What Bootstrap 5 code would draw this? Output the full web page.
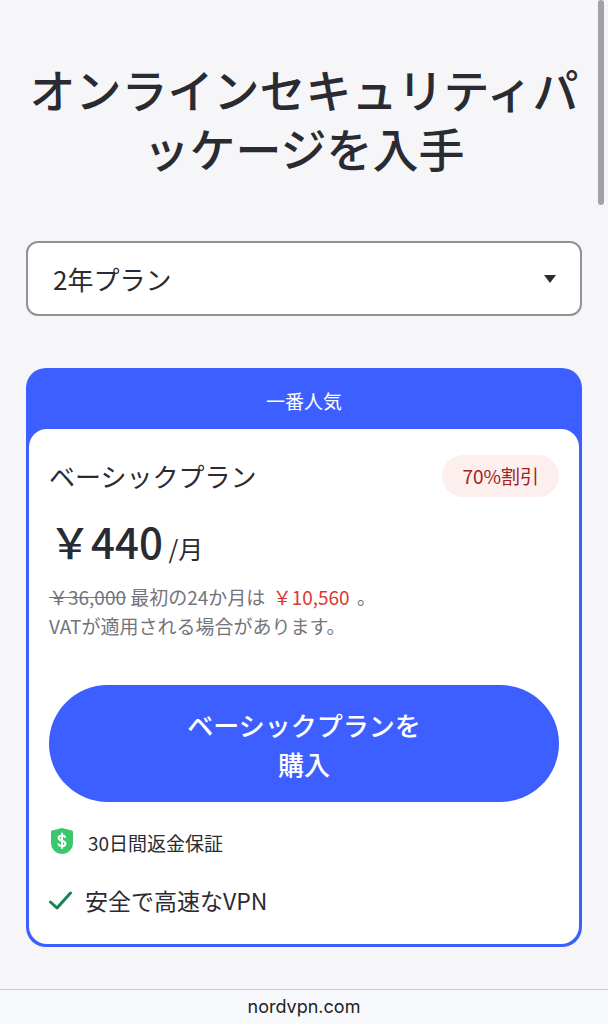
<!DOCTYPE html>
<html lang="ja">
<head>
<meta charset="utf-8">
<meta name="viewport" content="width=device-width, initial-scale=1">
<title>NordVPN</title>
<link href="https://cdn.jsdelivr.net/npm/bootstrap@5.3.0/dist/css/bootstrap.min.css" rel="stylesheet">
<script src="https://cdn.jsdelivr.net/npm/bootstrap@5.3.0/dist/js/bootstrap.bundle.min.js" defer></script>
<style>
:root{--brand:#3e5fff;--ink:#2a2b32;--soft:#74747c}
html{scrollbar-width:none}
body{font-family:"Noto Sans CJK JP",sans-serif;color:var(--ink);background:#f6f6f9}
.page{padding:59px 26px 40px}
.page-title{font-size:46px;line-height:59px;font-weight:500;margin:0 0 64px}
.plan-select{height:75px;border:2px solid #919197;border-radius:12px;font-size:26px;color:var(--ink);padding:0 60px 0 25px;background:#fff url("data:image/svg+xml,%3Csvg xmlns='http://www.w3.org/2000/svg' viewBox='0 0 12 8'%3E%3Cpath d='M0 0h12L6 8z' fill='%232a2b32'/%3E%3C/svg%3E") no-repeat right 24px center/12px 8px;margin-bottom:52px}
.plan{background:var(--brand);border-radius:20px;padding:0 3px 3px}
.plan-flag{color:#fff;font-size:19px;line-height:28px;padding:19px 0 14px}
.plan-body{background:#fff;border-radius:18px;padding:26px 20px 28px}
.plan-name{font-size:26px;line-height:42px;font-weight:400;margin:0}
.off{background:#fdefee;color:#a3211c;font-size:19px;line-height:42px;padding:0 20px}
.price{font-size:42px;line-height:52px;font-weight:500;margin-top:18px}
.per{font-size:25px}
.terms{font-size:19px;line-height:29px;color:var(--soft);margin:8px 0 45px}
.sale{color:#d93a30;margin:0 3px}
.buy{background:var(--brand);color:#fff;font-size:26px;line-height:39px;font-weight:500;padding:20px 130px 19px;--bs-btn-color:#fff;--bs-btn-hover-bg:#2f4fe8;--bs-btn-hover-color:#fff}
.perk{line-height:32px}
.guarantee{font-size:19px;gap:14px;margin:25px 0}
.feature{font-size:23px;gap:12px}
.address{height:35px;border-top:1px solid #c9c9ce;background:#f8f9fd;font:18px/34px Inter,sans-serif;color:#222}
.thumb{top:0;right:4px;width:6px;height:20vh;background:#a2a2a4;border-radius:3px}
</style>
</head>
<body class="d-flex flex-column min-vh-100">
<main class="page flex-grow-1">
<h1 class="page-title text-center">オンラインセキュリティパッケージを入手</h1>
<select class="form-select plan-select" aria-label="プラン期間"><option>2年プラン</option></select>
<section class="plan">
<div class="plan-flag text-center">一番人気</div>
<div class="plan-body">
<div class="d-flex justify-content-between"><h2 class="plan-name">ベーシックプラン</h2><span class="off rounded-pill">70%割引</span></div>
<div class="price">￥440<span class="per fw-normal"> /月</span></div>
<p class="terms"><s>￥36,000</s> 最初の24か月は <span class="sale">￥10,560</span> 。<br>VATが適用される場合があります。</p>
<button class="btn buy border-0 rounded-pill w-100" type="button">ベーシックプランを購入</button>
<div class="perk guarantee d-flex align-items-start">
<svg width="25" height="28" viewBox="-1 -1 25 28" aria-hidden="true"><path fill="#3cc66f" d="M12 0 22 2.500Q23 2.800 23 4V15C23 21.500 17.500 26 12 26S1 21.500 1 15V4Q1 2.800 2 2.500Z"/><path d="M15.300 9.800C15 8.200 13.700 7.500 12 7.500c-2 0-3.300 1-3.300 2.600 0 3.900 6.700 1.800 6.700 5.400 0 1.700-1.400 2.700-3.400 2.700-2.100 0-3.400-1-3.600-2.700M12 4.800v16" fill="none" stroke="#fff" stroke-width="2"/></svg>
<span>30日間返金保証</span>
</div>
<div class="perk feature d-flex align-items-center">
<svg width="24" height="20" viewBox="0 0 24 20" aria-hidden="true"><path d="m1.500 12 6.500 6L21.500 3" fill="none" stroke="#168452" stroke-width="3" stroke-linecap="round" stroke-linejoin="round"/></svg>
<span>安全で高速なVPN</span>
</div>
</div>
</section>
</main>
<footer class="address text-center">nordvpn.com</footer>
<div class="thumb position-fixed"></div>
</body>
</html>
